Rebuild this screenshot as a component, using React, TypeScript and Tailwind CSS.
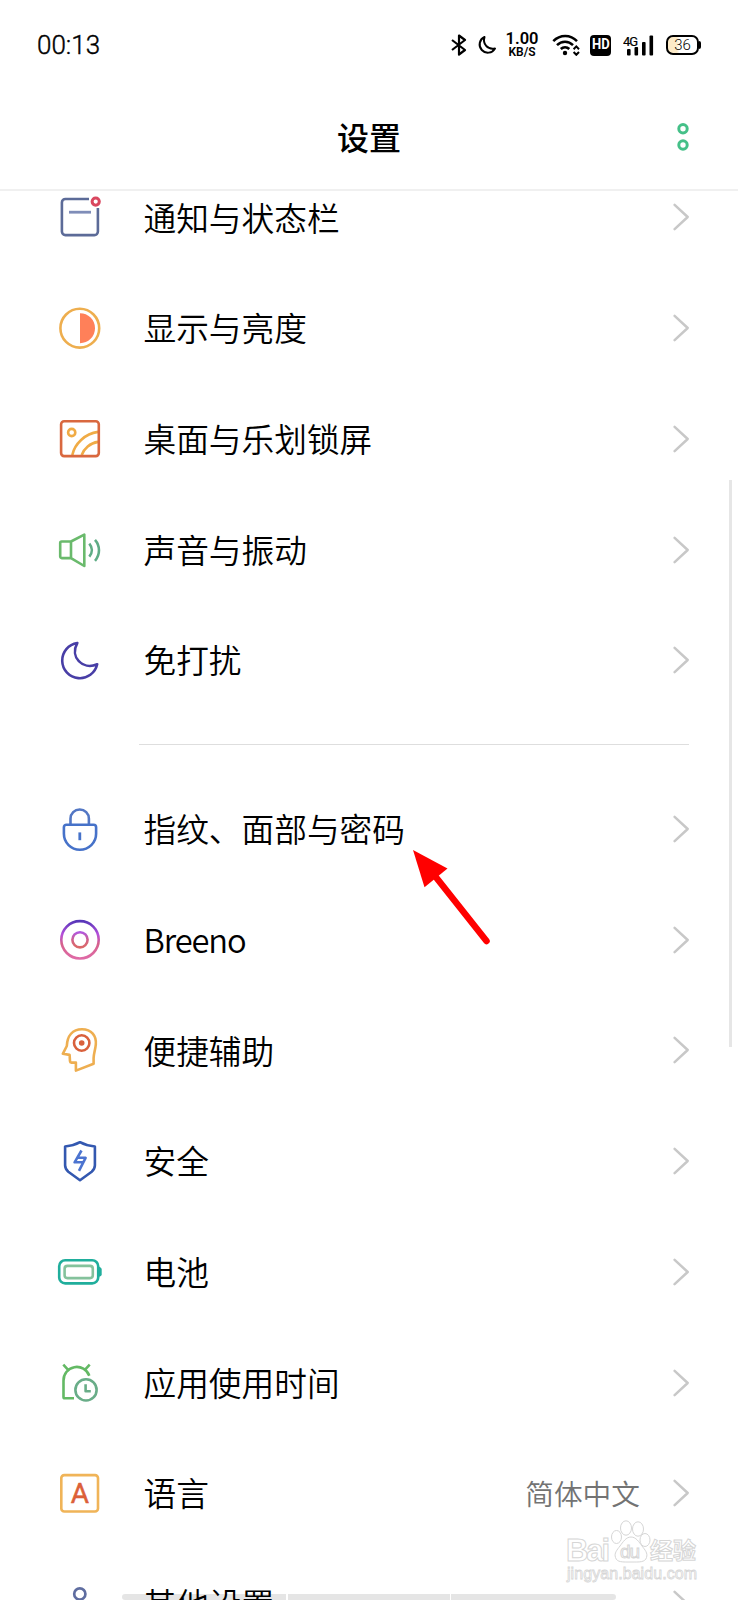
import React from "react";

type IconProps = { children: React.ReactNode };

const Icon = ({ children }: IconProps) => (
  <svg width="48" height="48" viewBox="0 0 48 48" fill="none" strokeWidth="2.6" strokeLinejoin="round" className="shrink-0">
    {children}
  </svg>
);

const NotificationIcon = () => (
  <Icon>
    <path d="M33 6H9.4a3.5 3.5 0 0 0-3.5 3.5v29.1a3.5 3.5 0 0 0 3.5 3.5h29a3.5 3.5 0 0 0 3.5-3.5V15" stroke="#5c6b98" />
    <path d="M13 19.2h22" stroke="#7f8db8" strokeWidth="2.8" />
    <circle cx="39.7" cy="8.6" r="3.6" stroke="#d9475f" strokeWidth="3" />
  </Icon>
);

const DisplayIcon = () => (
  <Icon>
    <circle cx="23.8" cy="24.2" r="19.4" stroke="#eeae4e" />
    <path d="M24 9.2a15 15 0 0 1 0 30z" fill="#ff8059" />
  </Icon>
);

const WallpaperIcon = () => (
  <Icon>
    <g stroke="#f0ab45">
      <circle cx="15.7" cy="17.5" r="3.6" />
      <path d="M16.3 40C18.5 29 29 18.5 42 16.9M25.7 40C28 33.5 34 28 42 26.9" />
    </g>
    <rect x="5.1" y="6.3" width="37.7" height="34.8" rx="3" stroke="#d9683f" />
  </Icon>
);

const SoundIcon = () => (
  <Icon>
    <path d="M15 15.5H5.7a1.5 1.5 0 0 0-1.5 1.5v13.6a1.5 1.5 0 0 0 1.5 1.5H15zL28.3 8.6v31.4L15 32.1" stroke="#6aba6c" />
    <path d="M33.3 17.6c3.4 4 3.4 9 0 13M39 13.8c5.3 6 5.3 15 0 21" stroke="#5eac85" />
  </Icon>
);

const MoonIcon = () => (
  <Icon>
    <path d="M21.3 7A17.7 17.7 0 1 0 41.2 28.3C26.5 34.5 13.5 21 21.3 7z" stroke="#483ea6" />
  </Icon>
);

const LockIcon = () => (
  <Icon>
    <path d="M14.5 19.8V13.7a9.2 9.2 0 0 1 18.4 0v6.1" stroke="#5377c4" />
    <path d="M10.4 19.8H37.6a2.5 2.5 0 0 1 2.5 2.5v6.5c0 9-7.3 15.9-16.2 15.9S7.9 37.8 7.9 28.8v-6.5a2.5 2.5 0 0 1 2.5-2.5z" stroke="#4672c9" />
    <path d="M23.8 27.4v7.8" stroke="#4672c9" strokeWidth="2.8" />
  </Icon>
);

const BreenoIcon = () => (
  <Icon>
    <defs>
      <linearGradient id="breenoOuter" x1="0" y1="0" x2="0" y2="1">
        <stop offset="0" stopColor="#5636b8" />
        <stop offset="0.35" stopColor="#b54fdc" />
        <stop offset="0.6" stopColor="#d5618c" />
        <stop offset="1" stopColor="#df6aa6" />
      </linearGradient>
      <linearGradient id="breenoInner" x1="0" y1="0" x2="0" y2="1">
        <stop offset="0" stopColor="#b157e0" />
        <stop offset="0.6" stopColor="#d5647f" />
        <stop offset="1" stopColor="#da6868" />
      </linearGradient>
    </defs>
    <circle cx="24" cy="23.8" r="18.7" stroke="url(#breenoOuter)" />
    <circle cx="24" cy="23.8" r="7.6" stroke="url(#breenoInner)" />
  </Icon>
);

const AssistIcon = () => (
  <Icon>
    <path d="M19.9 44.6V36.6H15.5a1.6 1.6 0 0 1-1.5-1.5l-.4-6.2-6.8-1.1L10.8 20C11.3 10 16.5 3.2 26 3.2c9.5 0 14.6 6.5 13.8 15.3-.5 5.5-2.2 9.5-2.2 13.5v5.800z" stroke="#eeae50" />
    <circle cx="25.7" cy="17" r="7.7" stroke="#d9603c" />
    <circle cx="25.7" cy="17" r="2.8" fill="#d9603c" />
  </Icon>
);

const ShieldIcon = () => (
  <Icon>
    <path d="M24 5.2c4.5 2.5 9.5 3.8 14.9 4.3v18.7c0 3-1 4.6-3.2 6.500L24 43.2l-11.7-8.5c-2.2-1.9-3.2-3.5-3.2-6.500V9.500C14.500 9 19.500 7.700 24 5.200z" stroke="#3358b0" />
    <path d="M25.500 13.500L18.600 25.300H27M23 33.800L29.600 20.800H21" stroke="#4c74d0" />
  </Icon>
);

const BatteryIcon = () => (
  <Icon>
    <rect x="3.2" y="12.2" width="39" height="23.2" rx="6" stroke="#20ae9c" />
    <path d="M42.5 18.8c2 .3 3.2 1.3 3.2 2.7v4.7c0 1.4-1.2 2.4-3.2 2.7z" fill="#20ae9c" />
    <rect x="8.6" y="17.9" width="28.2" height="12.2" rx="2.8" stroke="#84c29c" />
  </Icon>
);

const UsageIcon = () => (
  <Icon>
    <path d="M18 39.3H8.8a1.3 1.3 0 0 1-1.3-1.3V21.7a13.3 13.3 0 0 1 25.8-5M7.3 5.6l4.6 5M33.7 5.6l-4.6 5" stroke="#63b964" />
    <circle cx="30" cy="30.9" r="10.6" stroke="#69ad88" />
    <path d="M29.6 25.3v6.9h5.2" stroke="#69ad88" />
  </Icon>
);

const LanguageIcon = () => (
  <Icon>
    <rect x="5.3" y="6.1" width="36.7" height="36.4" rx="3" stroke="#f0b458" />
    <text x="23.8" y="34" textAnchor="middle" fill="#dc6038" stroke="#dc6038" strokeWidth="0.5" className="font-['Roboto',sans-serif] text-[28px] font-normal">
      A
    </text>
  </Icon>
);

const OtherIcon = () => (
  <Icon>
    <circle cx="23.8" cy="13.9" r="5.6" stroke="#5f6da0" strokeWidth="2.7" />
    <path d="M23.8 19.5v22" stroke="#5f6da0" />
  </Icon>
);

const Chevron = () => (
  <svg width="18" height="30" viewBox="0 0 18 30" fill="none" className="shrink-0">
    <path d="M2.6 2.8L15.7 15 2.6 27.2" stroke="#c8c8c8" strokeWidth="2.5" strokeLinecap="round" strokeLinejoin="round" />
  </svg>
);

type Item = { label: string; value?: string; icon: React.ReactNode; className?: string };

const general: Item[] = [
  { label: "通知与状态栏", icon: <NotificationIcon /> },
  { label: "显示与亮度", icon: <DisplayIcon /> },
  { label: "桌面与乐划锁屏", icon: <WallpaperIcon /> },
  { label: "声音与振动", icon: <SoundIcon /> },
  { label: "免打扰", icon: <MoonIcon /> },
];

const system: Item[] = [
  { label: "指纹、面部与密码", icon: <LockIcon /> },
  { label: "Breeno", icon: <BreenoIcon />, className: "tracking-[-1.1px]" },
  { label: "便捷辅助", icon: <AssistIcon /> },
  { label: "安全", icon: <ShieldIcon /> },
  { label: "电池", icon: <BatteryIcon /> },
  { label: "应用使用时间", icon: <UsageIcon /> },
  { label: "语言", value: "简体中文", icon: <LanguageIcon /> },
  { label: "其他设置", icon: <OtherIcon /> },
];

const renderRow = (item: Item) => (
  <li key={item.label} className="flex h-[110.7px] items-center pr-12 pl-14">
    {item.icon}
    <span className={`ml-[39.5px] flex-1 pb-px text-[32.7px] leading-none font-[350] ${item.className ?? ""}`}>{item.label}</span>
    {item.value && <span className="mr-8 text-[28.7px] leading-none font-[350] text-[#737373]">{item.value}</span>}
    <Chevron />
  </li>
);

const StatusBar = () => (
  <div className="flex h-[90px] items-center justify-between px-9 font-['Roboto',sans-serif]">
    <span className="pl-px text-[26px] leading-none font-[350] [-webkit-text-stroke:0.4px_#000]">00:13</span>
    <div className="flex items-center">
      <svg width="16" height="22" viewBox="0 0 16 22" fill="none" stroke="#000" strokeWidth="2.2" strokeLinejoin="round">
        <path d="M1 6l13 10L8 20.5V1.5L14 6 1 16" />
      </svg>
      <svg width="20" height="20" viewBox="0 0 20 20" fill="none" stroke="#000" strokeWidth="2" strokeLinejoin="round" className="ml-[10px]">
        <path d="M7.5 2A8.2 8.2 0 1 0 18 13.5C10.5 15 5.5 9 7.5 2z" />
      </svg>
      <div className="ml-[9px] flex w-8 flex-col items-center">
        <span className="text-[16.5px] leading-[14px] font-semibold">1.00</span>
        <span className="text-[12px] leading-[12px] font-semibold">KB/S</span>
      </div>
      <svg width="28" height="22" viewBox="0 0 28 22" fill="none" stroke="#000" strokeWidth="2.5" className="ml-[14px]">
        <path d="M1.3 7.2C8 .3 18.5.3 25 7.2M5 11.2c4.5-4.7 11.5-4.7 16 0M8.8 15c2.5-2.5 6-2.5 8.5 0" />
        <circle cx="13" cy="19" r="2.2" fill="#000" stroke="none" />
        <path d="M21.6 15.2l2.7-2.8 2.7 2.8M21.6 18l2.7 2.8 2.7-2.8" strokeWidth="2" />
      </svg>
      <span className="ml-[10px] flex h-[21px] w-[21px] items-center justify-center rounded-[4px] bg-black">
        <span className="scale-x-90 text-[14.5px] leading-none font-bold text-white">HD</span>
      </span>
      <svg width="31" height="22" viewBox="0 0 31 22" className="ml-3">
        <text x="0" y="11.5" className="font-['Roboto',sans-serif] text-[13px]" stroke="#000" strokeWidth="0.2" textLength="15">
          4G
        </text>
        <g fill="#000">
          <rect x="4" y="15" width="3.6" height="6.5" rx="1" />
          <rect x="11.5" y="13" width="3.6" height="8.5" rx="1" />
          <rect x="19" y="8" width="3.6" height="13.5" rx="1" />
          <rect x="26.5" y="1.5" width="3.6" height="20" rx="1" />
        </g>
      </svg>
      <div className="mr-px ml-3 flex items-center">
        <span className="flex h-5 w-[33px] items-center justify-center rounded-[7px] border-2 border-black bg-linear-to-r from-[#fdebc8] from-30% to-white to-40% text-[15px] leading-none font-light">
          36
        </span>
        <span className="h-2 w-[2px] rounded-r-sm bg-black" />
      </div>
    </div>
  </div>
);

const Watermark = () => (
  <svg width="140" height="66" viewBox="0 0 140 66" className="absolute top-[1517px] left-[562px]" fill="#fff" stroke="#d6d6d6" strokeWidth="1">
    <text x="4" y="44" textLength="44" className="font-['Liberation_Sans',sans-serif] text-[31px] font-bold">Bai</text>
    <ellipse cx="64" cy="11" rx="5.5" ry="7.2" />
    <ellipse cx="76" cy="12" rx="5.5" ry="7.2" />
    <ellipse cx="54.5" cy="20" rx="5" ry="6.5" />
    <ellipse cx="83" cy="23" rx="5" ry="6.5" />
    <path d="M69 20c5 0 8 5 11 9s6 7 4.5 11.5c-1.5 5-7 4.5-15.5 4.5s-14 .5-15.5-4.5C52 36 55 33 58 29s6-9 11-9z" />
    <text x="58" y="41" textLength="20" className="font-['Liberation_Sans',sans-serif] text-[19px]">du</text>
    <text x="88" y="42" textLength="46" className="font-['Noto_Sans_CJK_SC',sans-serif] text-[23px] font-bold">经验</text>
    <text x="5" y="62" textLength="130" strokeWidth="0.8" className="font-['Liberation_Sans',sans-serif] text-[16px]">jingyan.baidu.com</text>
  </svg>
);

const SettingsPage = () => {
  return (
    <div className="relative flex h-[1600px] w-[738px] flex-col overflow-hidden bg-white font-['Noto_Sans_CJK_SC',sans-serif] text-black">
      <StatusBar />
      {/* Header */}
      <header className="grid h-[101px] grid-cols-[1fr_auto_1fr] items-center border-b-2 border-[#f0f0f0] px-[49px] pb-[5px]">
        <h1 className="col-start-2 pb-[3px] text-[32px] leading-none font-medium">设置</h1>
        <svg width="12" height="30" viewBox="0 0 12 30" fill="none" stroke="#45c088" strokeWidth="3" className="justify-self-end">
          <circle cx="6" cy="6.7" r="4.2" />
          <circle cx="6" cy="23" r="4.2" />
        </svg>
      </header>
      {/* List */}
      <main className="flex-1 overflow-hidden">
        <ul className="-mt-[28.9px]">{general.map(renderRow)}</ul>
        <div className="flex h-[58.2px] items-center pr-[49px] pl-[139px]">
          <hr className="w-full border-[#dedede]" />
        </div>
        <ul>{system.map(renderRow)}</ul>
      </main>

      {/* Scrollbar */}
      <div className="absolute top-[480px] left-[729px] h-[567px] w-[3px] bg-[#e6e6e6]" />
      {/* Pointer */}
      <svg width="90" height="110" viewBox="0 0 90 110" className="absolute top-[840px] left-[405px]">
        <path d="M30 36L81.5 101" stroke="#f00" strokeWidth="6.5" strokeLinecap="round" />
        <path d="M8 10L42.5 28.5 19.5 47.3z" fill="#f00" />
      </svg>
      <Watermark />
      {/* Bottom gesture hints */}
      <div className="absolute bottom-0 left-[122px] flex gap-[1.5px]">
        <span className="h-[6px] w-[164px] rounded-l-full bg-black/10" />
        <span className="h-[6px] w-[162px] bg-black/10" />
        <span className="h-[6px] w-[165px] rounded-r-full bg-black/10" />
      </div>
    </div>
  );
};

export default SettingsPage;
